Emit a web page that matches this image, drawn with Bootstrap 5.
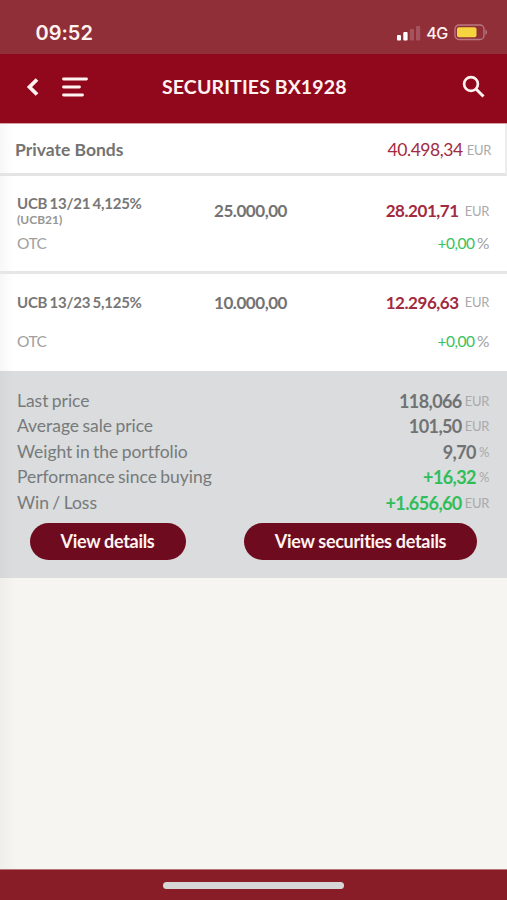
<!DOCTYPE html>
<html lang="en">
<head>
<meta charset="utf-8">
<meta name="viewport" content="width=device-width, initial-scale=1">
<title>Securities BX1928</title>
<link href="https://cdn.jsdelivr.net/npm/bootstrap@5.3.0/dist/css/bootstrap.min.css" rel="stylesheet">
<style>
body{font-family:Lato,"Liberation Sans",sans-serif;background:#f6f5f1;color:#737373;font-size:17px;line-height:24px;font-variant-ligatures:none}
.screen{height:900px;overflow:hidden;background:linear-gradient(90deg,#efeeeb 0,#f6f5f1 16px)}
.statusbar{height:54px;background:#912f39;padding:10px 19px 0 35.5px;font-family:Inter,sans-serif;color:#fff3f1}
.clock{font-size:20px;font-weight:600;line-height:22px}
.phone-status{height:29px}
.network{font-size:16px;font-weight:500;letter-spacing:-.3px;margin:0 6px 0 5.5px}
.appbar{height:70px;background:#91081d;border-bottom:1px solid #d9a0a5;color:#fff3f1;padding:0 21px 4px 26px}
.nav-icons{width:136px}
.title{font-size:19.5px;font-weight:700;letter-spacing:.13px}
.panel{background:linear-gradient(90deg,#f7f7f7 0,#fff 14px)}
.total{height:52px;border-bottom:3px solid #e4e4e4;border-right:2px solid #ededed;padding:2px 14px 0 15px}
.total-name{font-size:17.5px}
.total-value{font-size:17.5px;letter-spacing:-.45px}
.holding{height:98px;border-bottom:3px solid #e6e6e6;padding:19px 18px 0 17px}
.holding.last{height:97px;border-bottom:0;padding-top:20px}
.fund{width:197px;font-size:15px;font-weight:700;line-height:17px;letter-spacing:-.25px;word-spacing:-1px;color:#777}
.ticker{font-size:12px;line-height:15px;letter-spacing:0;color:#959595}
.qty,.value{letter-spacing:-.45px}
.qty{font-size:17px}
.value{font-size:17px;margin-right:6px}
.market{font-size:15.5px;color:#a0a0a0;line-height:20px;letter-spacing:-.5px;word-spacing:-.8px;margin-top:6px}
.last .market{margin-top:20px}
.unit{font-size:13px;font-weight:400;letter-spacing:-.3px;color:#aaa}
.total .unit{margin-left:4px}
.crimson{color:#a22a40}
.gain{color:#38c261}
.metrics{height:207px;background:linear-gradient(90deg,#d5d7d8 0,#dadcdd 14px);padding:17px 18px 0 17px}
.metric{height:25.5px;font-size:17.5px;letter-spacing:-.04px;word-spacing:-1px;color:#777a7c}
.metric .unit{margin-left:3px}
.amount{font-size:18px;font-weight:700;letter-spacing:-.6px;color:#707274}
.amount.gain{color:#2fbe5a}
.actions{margin-top:7.5px;padding:0 12px 0 12.5px}
.pill,.pill:hover{height:36.5px;border-radius:19px;background:#6e0b1e;color:#fff3f1}
.pill{font-size:18px;font-weight:700;letter-spacing:-.3px;padding:0;border:0;line-height:37px}
.pill-short{width:156px}
.pill-long{width:233px}
.homebar{height:31px;background:#881d27;border-top:1px solid #b77378;padding-top:4px}
.grabber{width:181px;height:7px;border-radius:4px;background:#d7d6d6}
</style>
</head>
<body>
<div class="screen d-flex flex-column">
  <div class="statusbar d-flex align-items-start justify-content-between">
    <span class="clock pt-2 mt-1">09:52</span>
    <div class="phone-status d-flex align-items-center pt-2 mt-1">
      <svg width="24" height="16" viewBox="0 0 24 16"><g fill="#fff"><rect y="10" width="4" height="5.5" rx="1"/><rect x="6.3" y="7" width="4.3" height="8.5" rx="1"/></g><g fill="#a6535d"><rect x="12.8" y="4" width="4.2" height="11.5" rx="1"/><rect x="19" y="1" width="4.2" height="14.5" rx="1"/></g></svg>
      <span class="network">4G</span>
      <svg width="34" height="17" viewBox="0 0 34 17"><rect x="1" y="1" width="29" height="14.5" rx="4" fill="none" stroke="#b87880" stroke-width="1.3"/><rect x="3" y="3.2" width="19.5" height="10" rx="2" fill="#f6d43f"/><path d="M31.5 5.5q2.8 2.7 0 5.5z" fill="#bd8188"/></svg>
    </div>
  </div>
  <header class="appbar d-flex align-items-center">
    <div class="nav-icons d-flex align-items-center">
      <svg width="14" height="20" viewBox="0 0 14 20"><path d="M11 2.500 3.500 10 11 17.500" fill="none" stroke="#fff3f1" stroke-width="3.800"/></svg>
      <svg width="50" height="20" viewBox="-22 0 50 20"><path d="M2 2h23M2 10h16M2 18h19" transform="translate(-.5)" stroke="#fff3f1" stroke-width="2.800" stroke-linecap="round"/></svg>
    </div>
    <span class="title">SECURITIES BX1928</span>
    <svg class="ms-auto" width="24" height="24" viewBox="0 0 24 24"><circle cx="9" cy="9" r="6.900" fill="none" stroke="#fff3f1" stroke-width="2.700"/><path d="m14 14 7.500 7.500" stroke="#fff3f1" stroke-width="3"/></svg>
  </header>
  <main>
    <section class="panel total d-flex align-items-center justify-content-between">
      <span class="fw-bold total-name">Private Bonds</span>
      <div class="d-flex align-items-center"><span class="crimson total-value">40.498,34</span><span class="unit">EUR</span></div>
    </section>
    <section class="panel holding">
      <div class="d-flex align-items-center">
        <div class="fund">UCB 13/21 4,125%<div class="ticker">(UCB21)</div></div>
        <span class="fw-bold qty">25.000,00</span>
        <div class="ms-auto d-flex align-items-center"><span class="crimson fw-bold value">28.201,71</span><span class="unit">EUR</span></div>
      </div>
      <div class="market d-flex justify-content-between"><span>OTC</span><span><span class="gain">+0,00</span> %</span></div>
    </section>
    <section class="panel holding last">
      <div class="d-flex align-items-center lh-1">
        <div class="fund">UCB 13/23 5,125%</div>
        <span class="fw-bold qty">10.000,00</span>
        <div class="ms-auto d-flex align-items-center"><span class="crimson fw-bold value">12.296,63</span><span class="unit">EUR</span></div>
      </div>
      <div class="market d-flex justify-content-between"><span>OTC</span><span><span class="gain">+0,00</span> %</span></div>
    </section>
    <section class="metrics">
      <div class="metric d-flex align-items-center justify-content-between"><span>Last price</span><span class="d-flex align-items-center"><span class="amount">118,066</span><span class="unit">EUR</span></span></div>
      <div class="metric d-flex align-items-center justify-content-between"><span>Average sale price</span><span class="d-flex align-items-center"><span class="amount">101,50</span><span class="unit">EUR</span></span></div>
      <div class="metric d-flex align-items-center justify-content-between"><span>Weight in the portfolio</span><span class="d-flex align-items-center"><span class="amount">9,70</span><span class="unit">%</span></span></div>
      <div class="metric d-flex align-items-center justify-content-between"><span>Performance since buying</span><span class="d-flex align-items-center"><span class="amount gain">+16,32</span><span class="unit">%</span></span></div>
      <div class="metric d-flex align-items-center justify-content-between"><span>Win / Loss</span><span class="d-flex align-items-center"><span class="amount gain">+1.656,60</span><span class="unit">EUR</span></span></div>
      <div class="actions d-flex justify-content-between">
        <button class="btn pill pill-short">View details</button>
        <button class="btn pill pill-long">View securities details</button>
      </div>
    </section>
  </main>
  <footer class="homebar mt-auto d-flex justify-content-center align-items-start"><div class="grabber mt-2"></div></footer>
</div>
<script src="https://cdn.jsdelivr.net/npm/bootstrap@5.3.0/dist/js/bootstrap.bundle.min.js"></script>
</body>
</html>
